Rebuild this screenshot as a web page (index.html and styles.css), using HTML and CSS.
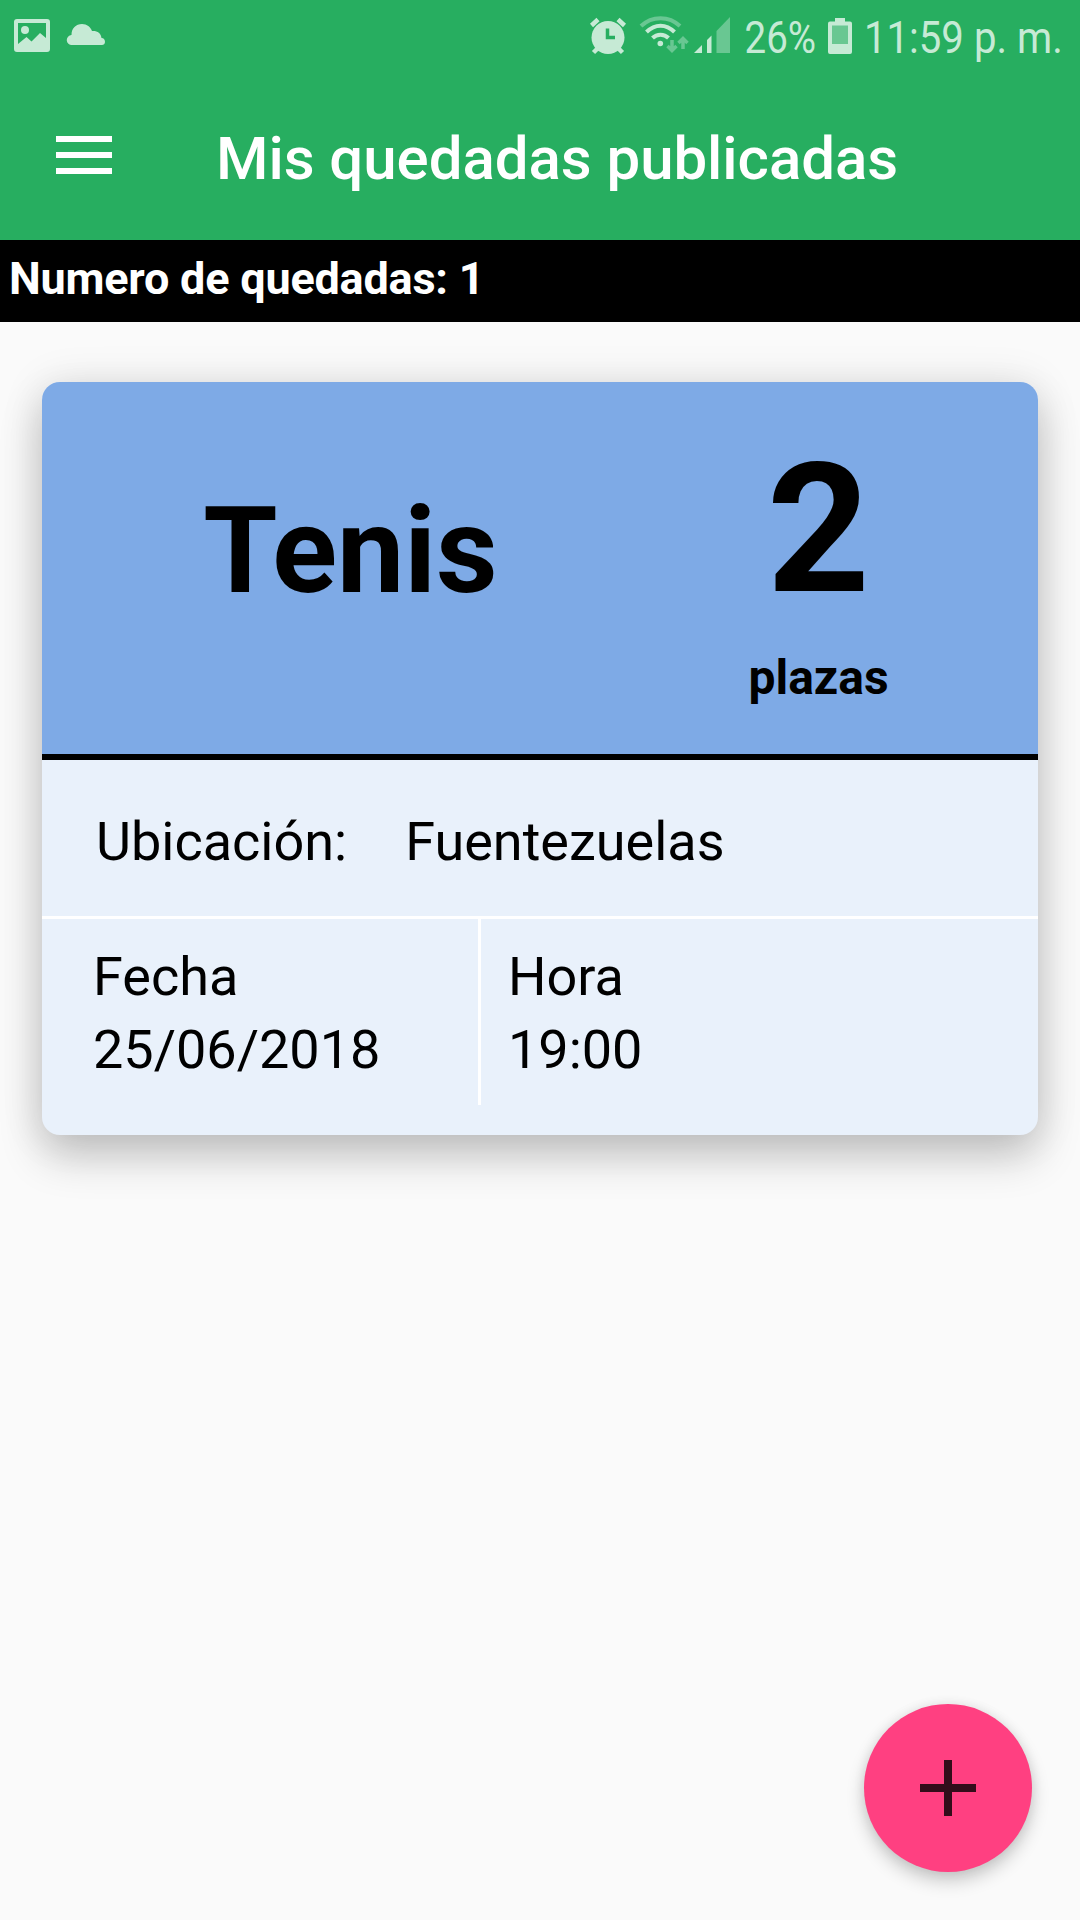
FILE: index.html
```html
<!DOCTYPE html>
<html lang="es">
<head>
<meta charset="utf-8">
<title>Mis quedadas publicadas</title>
<link rel="stylesheet" href="styles.css">
</head>
<body>
<div class="screen">
  <header class="top">
    <div class="status-bar">
      <svg class="status-icons" width="120" height="72" viewBox="0 0 120 72">
        <path fill-rule="evenodd" d="M17 19H47Q50 19 50 22V49Q50 52 47 52H17Q14 52 14 49V22Q14 19 17 19ZM18 23V44L26.500 37L31.500 41.500L40 33L46 38V23Z"/>
        <circle cx="25" cy="30" r="4"/>
        <path d="M72 45A5 5 0 0 1 71.500 35C71.500 28 76 24 82 24C87 24 90.500 27 92 31C97 30.500 101 33 101.500 38C104 38 105 40 105 42C105 44 103.500 45 102 45Z"/>
      </svg>
      <svg class="status-icons" width="510" height="72" viewBox="570 0 510 72">
        <circle cx="608" cy="37.500" r="16.500"/>
        <path class="alarm-limbs" d="M591.500 25.500L598 19.500M618 19.500L624.500 25.500M593.500 52.500L598 48M618 48L622.500 52.500"/>
        <path class="alarm-hands" d="M607.500 28.500V37.500H615"/>
        <path class="stroke-icon faint" d="M641 26C652 15.500 669 15.500 680 26"/>
        <path class="stroke-icon" d="M646.500 32C655 23.500 666 23.500 674.500 32M652.500 38C657 33.500 664 33.500 668.500 38"/>
        <circle cx="660.300" cy="43.500" r="2.800"/>
        <path class="arrows" d="M672 40V50.500M667.500 46L672 50.500L676.500 46M683 49V38.500M678.500 43L683 38.500L687.500 43"/>
        <path d="M694 53L702 45V53ZM707 40L711.500 35.500V53H707Z"/>
        <path class="fill-faint" d="M716.500 31L730 17V53H716.500Z"/>
        <text transform="translate(744.500 53) scale(.856 1)">26%</text>
        <path d="M835 18H845V21.500H850Q852 21.500 852 23.500V52Q852 54 850 54H830Q828 54 828 52V23.500Q828 21.500 830 21.500H835Z"/>
        <path class="battery-empty" d="M832 25.500H848V44H832Z"/>
        <text transform="translate(864 53) scale(.892 1)">11:59 p. m.</text>
      </svg>
    </div>
    <div class="app-bar">
      <svg class="menu-icon" width="56" height="38" viewBox="0 0 56 38"><path d="M0 0H56V6H0ZM0 16H56V22H0ZM0 32H56V38H0Z"/></svg>
      <h1 class="title">Mis quedadas publicadas</h1>
    </div>
  </header>
  <div class="counter">Numero de quedadas: 1</div>
  <main class="list">
    <article class="card">
      <div class="card-head">
        <h2 class="sport">Tenis</h2>
        <div class="places">
          <span class="places-count">2</span>
          <span class="places-label">plazas</span>
        </div>
      </div>
      <div class="location"><span>Ubicación:</span><span>Fuentezuelas</span></div>
      <div class="when">
        <div class="date"><span>Fecha</span><span>25/06/2018</span></div>
        <div class="time"><span>Hora</span><span>19:00</span></div>
      </div>
    </article>
  </main>
  <button class="fab" aria-label="Añadir">
    <svg width="56" height="56" viewBox="0 0 56 56"><path d="M24 0H32V24H56V32H32V56H24V32H0V24H24Z"/></svg>
  </button>
</div>
</body>
</html>
```
FILE: styles.css
```css
* { box-sizing: border-box; }
body { margin: 0; background: #fafafa; color: #000; font-family: Roboto, sans-serif; }
.screen { position: relative; width: 1080px; height: 1920px; overflow: hidden; }
.top { height: 240px; background: #27ae60; }
.status-bar { display: flex; justify-content: space-between; height: 72px; }
.status-icons { display: block; fill: #c6ead5; font-size: 45px; }
.alarm-limbs { fill: none; stroke: #c6ead5; stroke-width: 4.5; }
.alarm-hands { fill: none; stroke: #27ae60; stroke-width: 3.5; }
.stroke-icon { fill: none; stroke: #c6ead5; stroke-width: 4; }
.faint { stroke: #69c792; }
.fill-faint { fill: #69c792; }
.arrows { fill: none; stroke: #69c792; stroke-width: 3.5; }
.battery-empty { fill: #69c792; }
.app-bar { display: flex; align-items: center; height: 168px; padding: 0 56px 2px; }
.menu-icon { fill: #fff; }
.title { margin: 7px 0 0 104px; color: #fff; font-size: 60px; line-height: 72px; font-weight: 500; letter-spacing: -.05px; white-space: nowrap; }
.counter { height: 82px; padding: 9px 9px 0; background: #000; color: #fff; font-size: 45px; line-height: 60px; font-weight: 700; letter-spacing: -.22px; }
.list { padding: 60px 42px 0; }
.card { height: 753px; border-radius: 18px; background: #e9f1fb; box-shadow: 0 22px 44px rgba(0, 0, 0, .2), 0 2px 44px rgba(0, 0, 0, .11); }
.card-head { display: flex; height: 378px; border-bottom: 6px solid #000; border-radius: 18px 18px 0 0; background: #7eaae6; }
.sport { width: 617px; margin: 99px 0 0; font-size: 120px; line-height: 140px; font-weight: 700; text-align: center; }
.places { display: flex; flex-direction: column; align-items: center; width: 319px; padding-top: 43px; font-weight: 700; }
.places-count { font-size: 180px; line-height: 210px; }
.places-label { margin-top: 15px; font-size: 48px; line-height: 56px; }
.location { display: flex; gap: 58px; height: 159px; padding: 50px 54px 0; border-bottom: 3px solid #fff; font-size: 54px; line-height: 64px; }
.when { display: flex; height: 186px; font-size: 54px; line-height: 73px; }
.date, .time { display: flex; flex-direction: column; padding-top: 21px; }
.date { width: 439px; padding-left: 51px; border-right: 3px solid #fff; }
.time { padding-left: 27px; }
.fab { position: absolute; right: 48px; bottom: 48px; display: flex; align-items: center; justify-content: center; width: 168px; height: 168px; padding: 0; border: 0; border-radius: 50%; background: #ff4081; box-shadow: 0 9px 18px rgba(0, 0, 0, .2), 0 0 12px rgba(0, 0, 0, .08); }
.fab svg { fill: #330d1a; }
```
